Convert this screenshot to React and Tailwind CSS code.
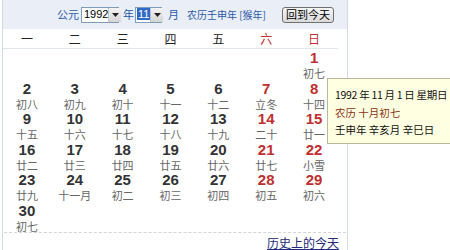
const rows = [
  [null, null, null, null, null, null, ['1', '初七']],
  [['2', '初八'], ['3', '初九'], ['4', '初十'], ['5', '十一'], ['6', '十二'], ['7', '立冬'], ['8', '十四']],
  [['9', '十五'], ['10', '十六'], ['11', '十七'], ['12', '十八'], ['13', '十九'], ['14', '二十'], ['15', '廿一']],
  [['16', '廿二'], ['17', '廿三'], ['18', '廿四'], ['19', '廿五'], ['20', '廿六'], ['21', '廿七'], ['22', '小雪']],
  [['23', '廿九'], ['24', '十一月'], ['25', '初二'], ['26', '初三'], ['27', '初四'], ['28', '初五'], ['29', '初六']],
  [['30', '初七'], null, null, null, null, null, null],
];

const weekdays = ['一', '二', '三', '四', '五', '六', '日'];

const Arrow = () => (
  <span className="flex h-full w-[13px] shrink-0 items-center justify-center border-l border-[#b8c4d8] bg-gradient-to-b from-[#f4f4f4] to-[#d4d4d4]">
    <svg width="7" height="4" viewBox="0 0 7 4">
      <path d="M0 0h7L3.5 4z" fill="#222" />
    </svg>
  </span>
);

const DayCell = ({ day, col }) => {
  if (!day) return <div className="h-[30.5px]" />;
  const weekend = col >= 5;
  return (
    <div className="flex h-[30.5px] flex-col items-center pt-[1px]">
      <span
        className={`font-['Liberation_Sans',sans-serif] text-[15px] font-bold leading-[16px] ${
          weekend ? 'text-[#c0302f]' : 'text-[#333]'
        }`}
      >
        {day[0]}
      </span>
      <span className="text-[11px] leading-[14px] text-[#666]">{day[1]}</span>
    </div>
  );
};

export default function App() {
  return (
    <div className="relative h-[250px] w-[450px] overflow-hidden bg-white font-['Noto_Sans_CJK_SC',sans-serif]">
      <div className="ml-[2px] flex h-[250px] w-[346px] flex-col border-x border-[#d3dae6]">
        <div className="flex h-[29px] shrink-0 items-center whitespace-nowrap bg-[#e9eef7] pl-[54px] text-[11px] text-[#2b5aa8]">
          <span className="shrink-0">公元</span>
          <span className="ml-[2px] flex h-[16px] w-[38px] shrink-0 items-center border border-[#7f9db9] bg-white font-['Liberation_Sans',sans-serif] text-[11px] text-black">
            <span className="flex-1 pl-[2px]">1992</span>
            <Arrow />
          </span>
          <span className="ml-[4px] shrink-0">年</span>
          <span className="ml-[1px] flex h-[16px] w-[27px] shrink-0 items-center border border-[#7f9db9] bg-white font-['Liberation_Sans',sans-serif] text-[11px]">
            <span className="flex-1 pl-[1px]">
              <span className="bg-[#3169c6] px-[1px] text-white">11</span>
            </span>
            <Arrow />
          </span>
          <span className="ml-[6px] shrink-0">月</span>
          <span className="ml-[8px] shrink-0 text-[10px]">农历壬申年 [猴年]</span>
          <button className="ml-[16px] h-[16px] shrink-0 rounded-[3px] border border-[#707070] bg-gradient-to-b from-[#f6f6f6] to-[#dadada] px-[3px] text-[11px] leading-[13px] text-black">
            回到今天
          </button>
        </div>

        <div className="grid h-[20px] w-[335px] shrink-0 grid-cols-7 items-center border-b border-[#e1e5ec] text-[12px]">
          {weekdays.map((w, i) => (
            <span key={w} className={`text-center ${i >= 5 ? 'text-[#c0302f]' : 'text-[#222]'}`}>
              {w}
            </span>
          ))}
        </div>

        <div className="grid w-[335px] shrink-0 grid-cols-7">
          {rows.flatMap((row, r) =>
            row.map((day, c) => <DayCell key={`${r}-${c}`} day={day} col={c} />)
          )}
        </div>

        <div className="mx-[1px] border-t border-dashed border-[#d5d5d5]" />
        <div className="flex justify-end pr-[8px] pt-[2px]">
          <a href="#" className="text-[12px] leading-[16px] text-[#242a7a] underline">
            历史上的今天
          </a>
        </div>
      </div>

      <div className="absolute left-[327px] top-[78px] h-[66px] w-[140px] whitespace-nowrap border border-[#b9b9a0] bg-[#ffffe1] pl-[7px] pt-[7px] text-[10.5px] leading-[17.5px]">
        <div className="tracking-[-0.3px] text-[#111]">1992 年 11 月 1 日 星期日</div>
        <div className="text-[#8a3416]">农历 十月初七</div>
        <div className="text-[#111]">壬申年 辛亥月 辛巳日</div>
      </div>
    </div>
  );
}
